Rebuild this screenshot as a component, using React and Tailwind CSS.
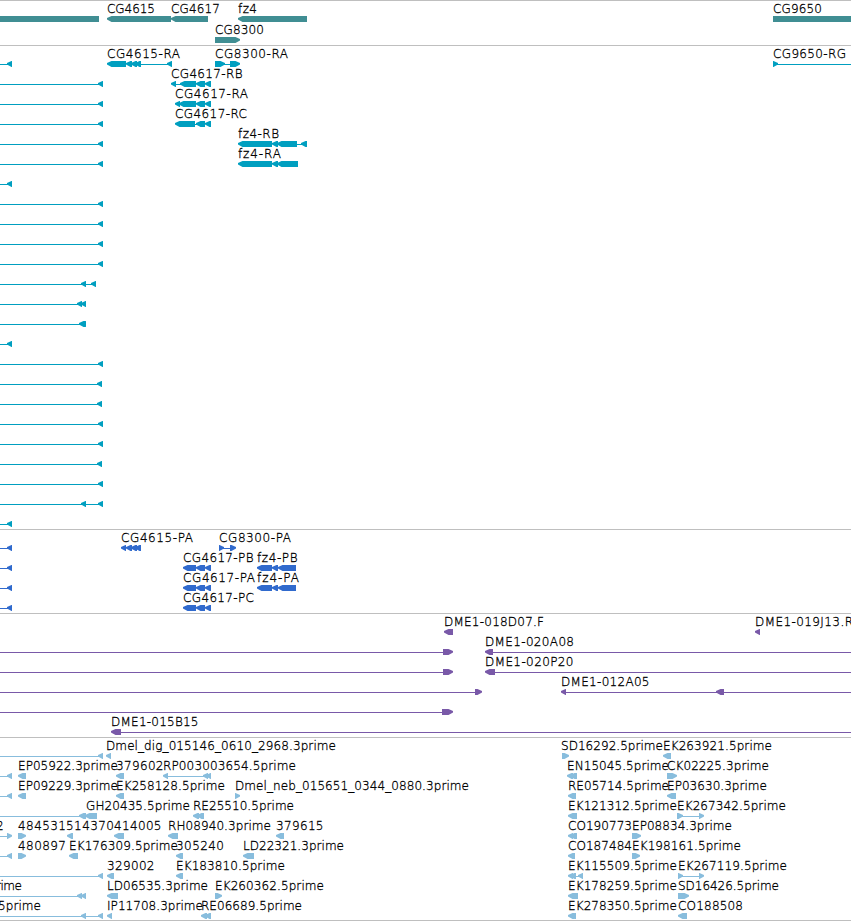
import React from "react";

// Feature kinds: L = left-pointing, R = right-pointing, B = plain block, "-" = connecting line.
// Labels: [x, width, text].
const end = (x) => [["-", 0, x], ["L", x - 5, x]];
const exonsPA = [["L", 183, 196], ["L", 196, 205], ["L", 205, 211]];
const fzPA = [["L", 257, 272], ["L", 272, 278], ["L", 278, 296]];

const tracks = [
  {
    tone: "fill-[#408e93]",
    row: "h-[21px]",
    pad: "pb-[2px]",
    rows: [
      {
        f: [["B", 0, 99], ["L", 107, 171], ["L", 171, 208], ["L", 238, 307], ["B", 773, 851]],
        t: [[107, 48, "CG4615"], [171, 49, "CG4617"], [238, 19, "fz4"], [773, 49, "CG9650"]],
      },
      { f: [["R", 215, 240]], t: [[215, 49, "CG8300"]] },
    ],
  },
  {
    tone: "fill-[#009fc0]",
    row: "h-5",
    pad: "pb-[3px]",
    rows: [
      {
        f: [...end(12), ["L", 107, 126], ["L", 126, 132], ["L", 131, 137], ["L", 135, 141], ["-", 141, 172], ["L", 167, 172], ["R", 215, 225], ["-", 224, 231], ["R", 230, 240], ["R", 773, 778], ["-", 773, 851]],
        t: [[107, 73, "CG4615-RA"], [215, 73, "CG8300-RA"], [773, 73, "CG9650-RG"]],
      },
      { f: [...end(103), ["L", 171, 176], ["-", 175, 182], ["L", 180, 196], ["L", 196, 205], ["L", 205, 211]], t: [[171, 71.5, "CG4617-RB"]] },
      { f: [...end(103), ["L", 175, 180], ["L", 179, 196], ["L", 196, 205], ["L", 205, 211]], t: [[175, 73, "CG4617-RA"]] },
      { f: [...end(103), ["L", 175, 195], ["-", 195, 198], ["L", 196, 205], ["L", 205, 211]], t: [[175, 72, "CG4617-RC"]] },
      { f: [...end(103), ["L", 238, 272], ["L", 272, 278], ["L", 277, 297], ["-", 297, 303], ["L", 301, 307]], t: [[238, 41, "fz4-RB"]] },
      { f: [...end(103), ["L", 238, 272], ["L", 272, 278], ["L", 277, 298]], t: [[238, 43, "fz4-RA"]] },
      { f: end(12) },
      { f: end(103) },
      { f: end(103) },
      { f: end(103) },
      { f: end(103) },
      { f: [...end(96), ["L", 81, 86]] },
      { f: [...end(86), ["L", 77, 82]] },
      { f: [...end(86), ["L", 79, 85]] },
      { f: end(12) },
      { f: end(103) },
      { f: end(102) },
      { f: end(102) },
      { f: end(103) },
      { f: end(103) },
      { f: end(102) },
      { f: end(103) },
      { f: [...end(103), ["L", 81, 86]] },
      { f: end(12) },
    ],
  },
  {
    tone: "fill-[#306acd]",
    row: "h-5",
    pad: "pb-[3px]",
    rows: [
      {
        f: [...end(12), ["L", 121, 126], ["L", 126, 132], ["L", 131, 137], ["L", 135, 141], ["R", 219, 224], ["-", 222, 231], ["R", 230, 236]],
        t: [[121, 72, "CG4615-PA"], [219, 72, "CG8300-PA"]],
      },
      { f: [...end(12), ...exonsPA, ...fzPA], t: [[183, 70.5, "CG4617-PB"], [257, 40.5, "fz4-PB"]] },
      { f: [...end(12), ...exonsPA, ...fzPA], t: [[183, 72, "CG4617-PA"], [257, 42, "fz4-PA"]] },
      { f: [...end(12), ...exonsPA], t: [[183, 71, "CG4617-PC"]] },
    ],
  },
  {
    tone: "fill-[#7959a8]",
    row: "h-5",
    pad: "pb-[3px]",
    rows: [
      { f: [["L", 444, 453], ["L", 755, 760]], t: [[444, 100, "DME1-018D07.F"], [755, 98, "DME1-019J13.R"]] },
      { f: [["-", 0, 444], ["R", 443, 453], ["L", 485, 493], ["-", 493, 851]], t: [[485, 89, "DME1-020A08"]] },
      { f: [["-", 0, 444], ["R", 443, 453], ["L", 485, 495], ["-", 495, 851]], t: [[485, 88.5, "DME1-020P20"]] },
      { f: [["-", 0, 476], ["R", 475, 482], ["L", 561, 566], ["-", 565, 851], ["L", 716, 724]], t: [[561, 88.5, "DME1-012A05"]] },
      { f: [["-", 0, 443], ["R", 442, 453]] },
      { f: [["L", 111, 121], ["-", 121, 851]], t: [[111, 87.5, "DME1-015B15"]] },
    ],
  },
  {
    tone: "fill-[#88bddd]",
    row: "h-5",
    pad: "pb-[2px]",
    rows: [
      {
        f: [...end(103), ["L", 106, 111], ["R", 562, 569], ["L", 663, 671]],
        t: [[106, 230, "Dmel_dig_015146_0610_2968.3prime"], [561, 102, "SD16292.5prime"], [663, 109, "EK263921.5prime"]],
      },
      {
        f: [...end(12), ["L", 18, 26], ["L", 116, 124], ["L", 163, 168], ["-", 167, 206], ["L", 203, 208], ["L", 206, 211], ["L", 567, 573], ["L", 570, 577], ["R", 667, 677]],
        t: [[18, 100, "EP05922.3prime"], [116, 47.5, "379602"], [163, 133, "RP003003654.5prime"], [567, 102, "EN15045.5prime"], [667, 102, "CK02225.3prime"]],
      },
      {
        f: [...end(12), ["L", 18, 26], ["L", 116, 124], ["R", 235, 240], ["L", 568, 574], ["L", 570, 576], ["L", 667, 676]],
        t: [[18, 100, "EP09229.3prime"], [116, 109, "EK258128.5prime"], [235, 234, "Dmel_neb_015651_0344_0880.3prime"], [568, 101, "RE05714.5prime"], [667, 100, "EP03630.3prime"]],
      },
      {
        f: [["-", 0, 87], ["L", 79, 86], ["L", 85, 97], ["L", 193, 199], ["L", 197, 204], ["L", 568, 577], ["R", 677, 683], ["-", 681, 700], ["R", 699, 704]],
        t: [[86, 104, "GH20435.5prime"], [193, 101, "RE25510.5prime"], [568, 109, "EK121312.5prime"], [677, 109, "EK267342.5prime"]],
      },
      {
        f: [["-", 0, 8], ["R", 7, 12], ["R", 18, 26], ["L", 67, 73], ["L", 114, 124], ["L", 168, 178], ["L", 276, 282], ["L", 278, 284], ["L", 568, 573], ["L", 570, 577], ["R", 632, 641]],
        t: [[-4, 8, "2"], [18, 48, "484531"], [66, 48, "514370"], [114, 47.5, "414005"], [168, 103, "RH08940.3prime"], [276, 47.5, "379615"], [568, 64, "CO190773"], [632, 100, "EP08834.3prime"]],
      },
      {
        f: [...end(12), ["R", 18, 26], ["L", 69, 78], ["L", 176, 183], ["L", 243, 254], ["L", 568, 575], ["R", 632, 640]],
        t: [[18, 48, "480897"], [69, 109, "EK176309.5prime"], [176, 48, "305240"], [243, 101, "LD22321.3prime"], [568, 64, "CO187484"], [632, 109, "EK198161.5prime"]],
      },
      {
        f: [...end(103), ["L", 107, 114], ["L", 176, 183], ["L", 568, 573], ["L", 570, 576], ["-", 575, 580], ["L", 578, 583], ["R", 678, 683], ["-", 682, 700], ["R", 699, 704]],
        t: [[107, 47.5, "329002"], [176, 109, "EK183810.5prime"], [568, 109, "EK115509.5prime"], [678, 109, "EK267119.5prime"]],
      },
      {
        f: [...end(86), ["L", 77, 82], ["L", 107, 118], ["R", 215, 222], ["L", 568, 578], ["R", 678, 689]],
        t: [[-4, 26, "rime"], [107, 101, "LD06535.3prime"], [215, 109, "EK260362.5prime"], [568, 109, "EK178259.5prime"], [678, 101, "SD16426.5prime"]],
      },
      {
        f: [...end(103), ["L", 81, 86], ["L", 107, 112], ["L", 201, 207], ["L", 205, 211], ["L", 568, 574], ["L", 570, 576], ["L", 678, 687]],
        t: [[-2, 43, "5prime"], [107, 96, "IP11708.3prime"], [201, 101, "RE06689.5prime"], [568, 109, "EK278350.5prime"], [678, 65, "CO188508"]],
      },
    ],
  },
];

function Feature({ kind, a, b }) {
  if (kind === "-") return <rect x={a} y="18" width={b - a} height="1" shapeRendering="crispEdges" />;
  if (kind === "B") return <rect x={a} y="15" width={b - a} height="6" />;
  const tip = kind === "L" ? a : b;
  const base = kind === "L" ? b : a;
  const neck = kind === "L" ? a + 4.5 : b - 4.5;
  return <polygon points={`${tip},17 ${tip},18.5 ${neck},21 ${base},21 ${base},15 ${neck},15`} />;
}

function Row({ row, tone, height }) {
  return (
    <svg className={`block w-full shrink-0 overflow-visible ${height}`}>
      <g className={tone}>
        {row.f.map(([kind, a, b], i) => (
          <Feature key={i} kind={kind} a={a} b={b} />
        ))}
      </g>
      {(row.t || []).map(([x, w, label]) => (
        <text key={label} x={x} y="12" textLength={w} className="fill-black stroke-black stroke-[0.3px] text-[12px] font-extralight">
          {label}
        </text>
      ))}
    </svg>
  );
}

export default function App() {
  return (
    <main className="flex h-[921px] w-[851px] flex-col overflow-hidden border-b border-[#bfbfbf] bg-white font-['DejaVu_Sans_Light','DejaVu_Sans',sans-serif]">
      {tracks.map((track, i) => (
        <section key={i} className={`flex flex-col border-t border-[#bfbfbf] ${track.pad}`}>
          {track.rows.map((row, j) => (
            <Row key={j} row={row} tone={track.tone} height={track.row} />
          ))}
        </section>
      ))}
    </main>
  );
}
